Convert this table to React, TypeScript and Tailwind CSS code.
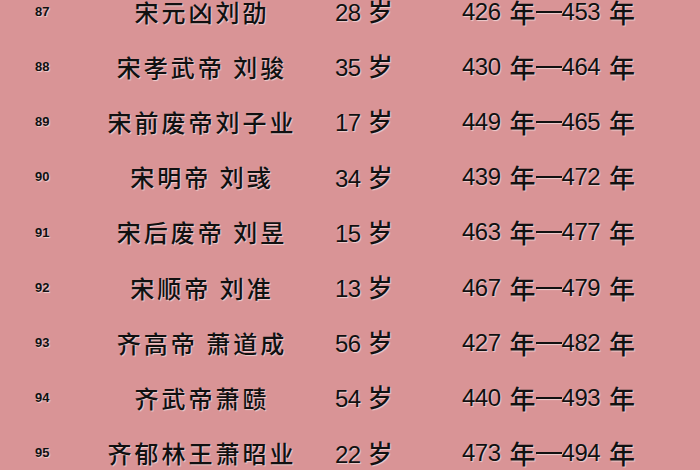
const rows = [
  { no: "87", name: "宋元凶刘劭", age: "28", from: "426", to: "453" },
  { no: "88", name: "宋孝武帝 刘骏", age: "35", from: "430", to: "464" },
  { no: "89", name: "宋前废帝刘子业", age: "17", from: "449", to: "465" },
  { no: "90", name: "宋明帝 刘彧", age: "34", from: "439", to: "472" },
  { no: "91", name: "宋后废帝 刘昱", age: "15", from: "463", to: "477" },
  { no: "92", name: "宋顺帝 刘准", age: "13", from: "467", to: "479" },
  { no: "93", name: "齐高帝 萧道成", age: "56", from: "427", to: "482" },
  { no: "94", name: "齐武帝萧赜", age: "54", from: "440", to: "493" },
  { no: "95", name: "齐郁林王萧昭业", age: "22", from: "473", to: "494" },
]

const cjk = "font-['Noto_Sans_CJK_SC',sans-serif]"
const num = "font-['Liberation_Sans',sans-serif] tracking-[-0.5px]"

export default function App() {
  return (
    <div className="h-[470px] w-[700px] overflow-hidden bg-[#d99496] text-[#111]">
      <div className="-mt-[16px] flex flex-col [text-shadow:1px_1px_1px_rgba(255,255,255,0.55)]">
        {rows.map((r) => (
          <div key={r.no} className="flex h-[55.2px] items-center">
            <div className="w-[80px] pl-[35px] font-['Liberation_Sans',sans-serif] text-[13px] font-bold">
              {r.no}
            </div>
            <div className={`w-[244px] text-center text-[24px] font-medium tracking-[3px] ${cjk}`}>
              {r.name}
            </div>
            <div className="w-[138px] pl-[11px] leading-none">
              <span className={`text-[24px] ${num}`}>{r.age}</span>
              <span className={`ml-[7px] text-[25px] font-medium ${cjk}`}>岁</span>
            </div>
            <div className="flex items-center leading-none whitespace-nowrap">
              <span className={`text-[24px] ${num}`}>{r.from}</span>
              <span className={`ml-[9px] text-[26px] font-medium ${cjk}`}>年</span>
              <span className="h-[2px] w-[26px] bg-[#111] shadow-[1px_1px_1px_rgba(255,255,255,0.55)]" />
              <span className={`text-[24px] ${num}`}>{r.to}</span>
              <span className={`ml-[9px] text-[26px] font-medium ${cjk}`}>年</span>
            </div>
          </div>
        ))}
      </div>
    </div>
  )
}
